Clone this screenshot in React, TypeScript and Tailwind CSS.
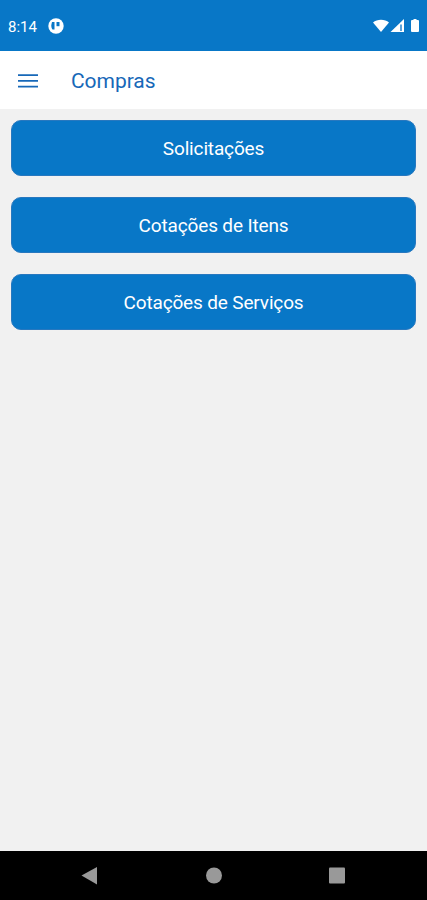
export default function App() {
  const items = ["Solicitações", "Cotações de Itens", "Cotações de Serviços"];
  return (
    <div className="flex h-[900px] w-full flex-col bg-[#f1f1f1] font-['Roboto',sans-serif]">
      <div className="flex h-[51px] shrink-0 items-center bg-[#0877c7] pt-px pr-[6px] pl-[8px] text-white">
        <span className="pt-[2px] text-[15px] leading-none">8:14</span>
        <svg className="ml-[11px]" width="16" height="16" viewBox="0 0 16 16">
          <circle cx="8" cy="8" r="7.7" fill="white" />
          <path d="M4 4H6.5V11.5H4.5C3.7 10.5 3.3 9 3.3 7Z" fill="#0877c7" />
          <path d="M8.5 4H11.5V8.2H8.5Z" fill="#0877c7" />
        </svg>
        <svg className="ml-auto" width="48" height="16" viewBox="0 0 48 16" fill="white">
          <path d="M0 4.5C4 .8 12 .8 16 4.5L8 14Z" />
          <path d="M17.5 14L31 1V14Z" />
          <path d="M27 6.5H29V13H27Z" fill="#5ba3da" />
          <path d="M39 2H40.5V1H43.5V2H45Q46 2 46 3V13Q46 14 45 14H39Q38 14 38 13V3Q38 2 39 2Z" />
        </svg>
      </div>
      <header className="flex h-[58px] shrink-0 items-center bg-white pt-[2px] pl-[18px] text-[#1768b8]">
        <svg width="20" height="14" viewBox="0 0 20 14" fill="currentColor">
          <path d="M0 .2H20V2H0ZM0 6H20V7.8H0ZM0 11.8H20V13.6H0Z" />
        </svg>
        <h1 className="ml-[33px] pt-[2px] text-[21px] tracking-[-0.05px]">Compras</h1>
      </header>
      <main className="flex flex-1 flex-col gap-[21px] px-[11px] pt-[11px]">
        {items.map((t) => (
          <button key={t} className="h-[56px] rounded-[10px] border border-[#2878bf] bg-[#0877c7] pt-[2px] text-[19px] tracking-[-0.15px] text-white">{t}</button>
        ))}
      </main>
      <nav className="flex h-[49px] shrink-0 items-center bg-black">
        <svg width="427" height="49" viewBox="0 0 427 49" fill="#999">
          <path d="M81.5 24.5L97 16V33.5Z" />
          <circle cx="214" cy="24.5" r="8" />
          <rect x="329" y="16.5" width="16" height="16" rx="1" />
        </svg>
      </nav>
    </div>
  );
}
